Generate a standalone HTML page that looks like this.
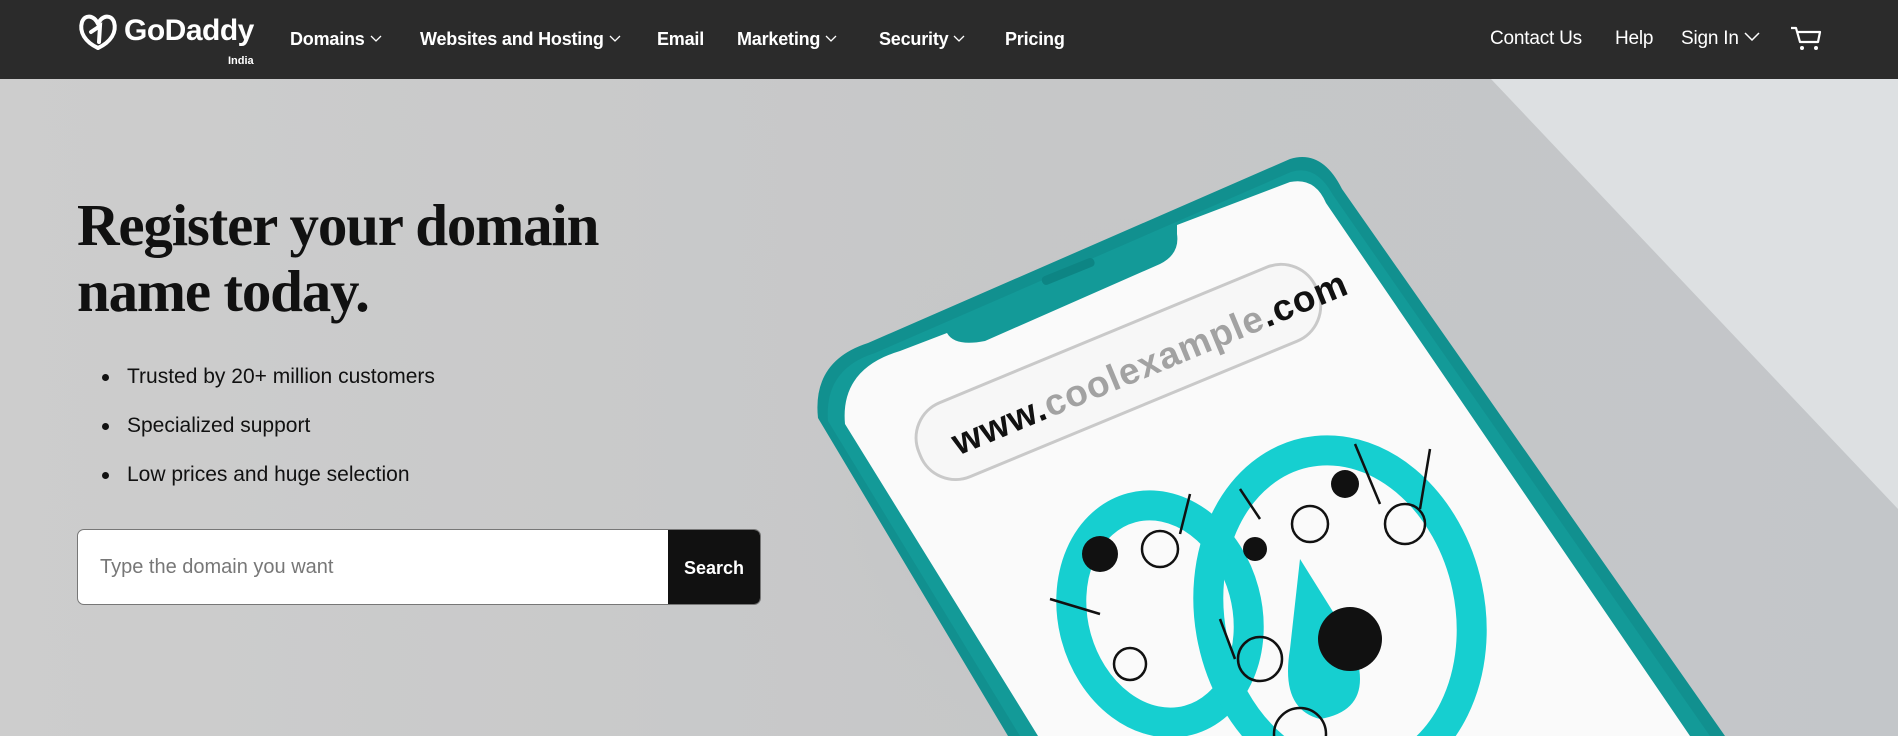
<!DOCTYPE html>
<html><head><meta charset="utf-8"><style>
*{margin:0;padding:0;box-sizing:border-box}
body{width:1898px;height:736px;overflow:hidden;font-family:"Liberation Sans",Arial,sans-serif;background:#cbcbcb;position:relative}
nav{position:absolute;left:0;top:0;width:1898px;height:79px;background:#2b2b2b;color:#fff}
.logo{position:absolute;left:77px;top:12px}
.brand{position:absolute;left:124px;top:14px;font-size:30px;font-weight:bold;letter-spacing:-0.5px}
.india{position:absolute;left:228px;top:55px;font-size:11px;font-weight:bold}
.item{position:absolute;top:29px;font-size:18px;font-weight:bold;letter-spacing:-0.2px}
.item svg{margin-left:5px;vertical-align:3px}
.r{font-weight:normal;font-size:19px;top:28px}
.hero{position:absolute;left:0;top:79px;width:1898px;height:657px;overflow:hidden}
h1{position:absolute;left:77px;font-family:"Liberation Serif",serif;font-weight:bold;font-size:59px;line-height:66px;letter-spacing:-1.2px;color:#111}
ul{position:absolute;left:104px;list-style:none;font-size:21px;color:#111}
li{height:49px;position:relative}
li:before{content:"";position:absolute;left:-2px;top:9px;width:7px;height:7px;border-radius:50%;background:#111}
li span{margin-left:23px}
.search{position:absolute;left:77px;top:529px;width:684px;height:76px;background:#fff;border:1px solid #777;border-radius:7px;overflow:hidden}
.search .ph{position:absolute;left:22px;top:26px;font-size:20px;color:#777}
.search .btn{position:absolute;right:0;top:0;width:92px;height:76px;background:#111;color:#fff;font-weight:bold;font-size:18px;text-align:center;line-height:76px}
</style></head><body>
<div class="hero">
<svg width="1898" height="657" style="position:absolute;left:0;top:0">
<defs>
<linearGradient id="bg" x1="0" y1="0" x2="1" y2="0"><stop offset="0" stop-color="#cdcdcd"/><stop offset="0.55" stop-color="#c6c7c8"/><stop offset="1" stop-color="#c3c6c9"/></linearGradient>
<radialGradient id="sh" cx="0.5" cy="0.5" r="0.5"><stop offset="0" stop-color="#a9abad" stop-opacity="0.6"/><stop offset="1" stop-color="#c6c7c8" stop-opacity="0"/></radialGradient>
</defs>
<rect width="1898" height="657" fill="url(#bg)"/>
<polygon points="1491,0 1898,0 1898,430" fill="#dde0e2"/>
<ellipse cx="1200" cy="420" rx="420" ry="300" fill="url(#sh)"/>
<path d="M818,339 Q812,282 868,264 L1290,80 Q1322,70 1342,110 L1725,657 L1008,657 Z" fill="#11908f"/>
<path d="M828,342 Q824,290 875,274 L1291,93 Q1316,85 1333,116 L1710,657 L1020,657 Z" fill="#139a98"/>
<path d="M845,345 Q840,290 900,272 L947,254 Q955,268 985,262 L1160,185 Q1180,175 1177,155 L1177,146 L1290,103 Q1315,98 1326,124 L1690,657 L1038,657 Z" fill="#fafafa"/>
<rect x="1040" y="188" width="56" height="9" rx="4" fill="#0d8584" transform="rotate(-22 1068 192)"/>
<g transform="rotate(-22.5 1118 292)">
<rect x="903" y="253" width="430" height="80" rx="38" fill="#f7f7f7" stroke="#c9c9c9" stroke-width="3"/>
<text x="938" y="309" font-family="Liberation Sans,Arial,sans-serif" font-size="37" font-weight="bold" fill="#111" letter-spacing="1">www.<tspan fill="#a2a2a2">coolexample</tspan>.com</text>
</g>
<g fill="none" stroke="#16cfd0" stroke-width="30">
<ellipse cx="1160" cy="535" rx="87" ry="110" transform="rotate(-15 1160 535)"/>
<ellipse cx="1340" cy="535" rx="130" ry="165" transform="rotate(-12 1340 535)"/>
</g>
<path d="M1300,480 L1350,560 Q1380,630 1320,640 Q1280,630 1290,570 Z" fill="#16cfd0"/>
<g fill="#111">
<circle cx="1350" cy="560" r="32"/>
<circle cx="1100" cy="475" r="18"/>
<circle cx="1255" cy="470" r="12"/>
<circle cx="1345" cy="405" r="14"/>
</g>
<g fill="none" stroke="#111" stroke-width="2.5">
<circle cx="1160" cy="470" r="18"/><circle cx="1310" cy="445" r="18"/><circle cx="1405" cy="445" r="20"/>
<circle cx="1260" cy="580" r="22"/><circle cx="1130" cy="585" r="16"/><circle cx="1300" cy="655" r="26"/>
<path d="M1180,455 L1190,415 M1260,440 L1240,410 M1380,425 L1355,365 M1420,430 L1430,370 M1100,535 L1050,520 M1235,580 L1220,540"/>
</g>
</svg>
<h1 style="top:113px">Register your domain<br>name today.</h1>
<ul style="top:286px"><li><span>Trusted by 20+ million customers</span></li><li><span>Specialized support</span></li><li><span>Low prices and huge selection</span></li></ul>
</div>
<div class="search"><span class="ph">Type the domain you want</span><div class="btn">Search</div></div>
<nav>
<svg class="logo" width="42" height="40" viewBox="0 0 42 40"><path d="M21,36 C8,30 2,20 5,10 C8,2 17,3 21,12 C25,3 34,2 37,10 C40,20 34,30 21,36 Z" fill="none" stroke="#fff" stroke-width="4" stroke-linejoin="round"/><path d="M14,20 L23,14 L22,30" fill="none" stroke="#fff" stroke-width="4" stroke-linecap="round"/></svg>
<div class="brand">GoDaddy</div>
<div class="india">India</div>
<div class="item" style="left:290px">Domains<svg width="12" height="7"><path d="M1,1 L6,6 L11,1" fill="none" stroke="#fff" stroke-width="1.3"/></svg></div>
<div class="item" style="left:420px">Websites and Hosting<svg width="12" height="7"><path d="M1,1 L6,6 L11,1" fill="none" stroke="#fff" stroke-width="1.3"/></svg></div>
<div class="item" style="left:657px">Email</div>
<div class="item" style="left:737px">Marketing<svg width="12" height="7"><path d="M1,1 L6,6 L11,1" fill="none" stroke="#fff" stroke-width="1.3"/></svg></div>
<div class="item" style="left:879px">Security<svg width="12" height="7"><path d="M1,1 L6,6 L11,1" fill="none" stroke="#fff" stroke-width="1.3"/></svg></div>
<div class="item" style="left:1005px">Pricing</div>
<div class="item r" style="left:1490px">Contact Us</div>
<div class="item r" style="left:1615px">Help</div>
<div class="item r" style="left:1681px">Sign In<svg width="16" height="9"><path d="M1,1 L8,8 L15,1" fill="none" stroke="#fff" stroke-width="1.5"/></svg></div>
<svg style="position:absolute;left:1790px;top:26px" width="32" height="26" viewBox="0 0 32 26"><path d="M1,2 L6,2 L10,16 L28,16 L30,6 L8,6" fill="none" stroke="#fff" stroke-width="2.2" stroke-linejoin="round"/><circle cx="12" cy="22" r="2" fill="#fff"/><circle cx="26" cy="22" r="2" fill="#fff"/></svg>
</nav>
</body></html>
